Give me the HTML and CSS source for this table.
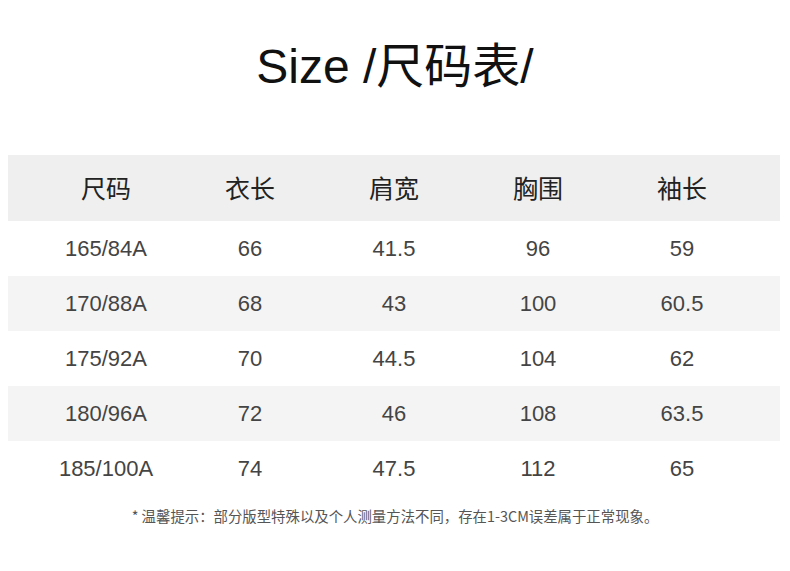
FILE: index.html
```html
<!DOCTYPE html>
<html lang="zh">
<head>
<meta charset="utf-8">
<link rel="stylesheet" href="styles.css">
</head>
<body>
<div class="page">
  <h1 class="title">Size /尺码表/</h1>
  <div class="table">
    <div class="row head">
      <div class="cell">尺码</div><div class="cell">衣长</div><div class="cell">肩宽</div><div class="cell">胸围</div><div class="cell">袖长</div>
    </div>
    <div class="row">
      <div class="cell">165/84A</div><div class="cell">66</div><div class="cell">41.5</div><div class="cell">96</div><div class="cell">59</div>
    </div>
    <div class="row alt">
      <div class="cell">170/88A</div><div class="cell">68</div><div class="cell">43</div><div class="cell">100</div><div class="cell">60.5</div>
    </div>
    <div class="row">
      <div class="cell">175/92A</div><div class="cell">70</div><div class="cell">44.5</div><div class="cell">104</div><div class="cell">62</div>
    </div>
    <div class="row alt">
      <div class="cell">180/96A</div><div class="cell">72</div><div class="cell">46</div><div class="cell">108</div><div class="cell">63.5</div>
    </div>
    <div class="row">
      <div class="cell">185/100A</div><div class="cell">74</div><div class="cell">47.5</div><div class="cell">112</div><div class="cell">65</div>
    </div>
  </div>
  <p class="note">* 温馨提示：部分版型特殊以及个人测量方法不同，存在1-3CM误差属于正常现象。</p>
</div>
</body>
</html>
```
FILE: styles.css
```css
html, body {
  margin: 0;
  padding: 0;
  background: #ffffff;
}
body {
  font-family: "Liberation Sans", "Noto Sans CJK SC", sans-serif;
  color: #222;
}
.page {
  width: 790px;
  height: 571px;
  padding-top: 36px;
  box-sizing: border-box;
}
.title {
  margin: 0;
  height: 62px;
  line-height: 62px;
  text-align: center;
  font-size: 48px;
  font-weight: normal;
  color: #111;
}
.table {
  margin: 57px 0 0 8px;
  width: 772px;
}
.row {
  display: grid;
  grid-template-columns: repeat(5, 144px);
  padding: 0 26px;
  height: 55px;
  align-items: center;
  font-size: 22px;
  color: #444;
}
.row.head {
  height: 66px;
  padding-bottom: 3px;
  box-sizing: border-box;
  background: #efefef;
  font-size: 25px;
  color: #222;
}
.row.alt {
  background: #f4f4f4;
}
.cell {
  text-align: center;
}
.note {
  margin: 9px 0 0;
  text-align: center;
  font-family: "Noto Sans CJK SC", sans-serif;
  font-size: 14.4px;
  color: #555;
}
```
